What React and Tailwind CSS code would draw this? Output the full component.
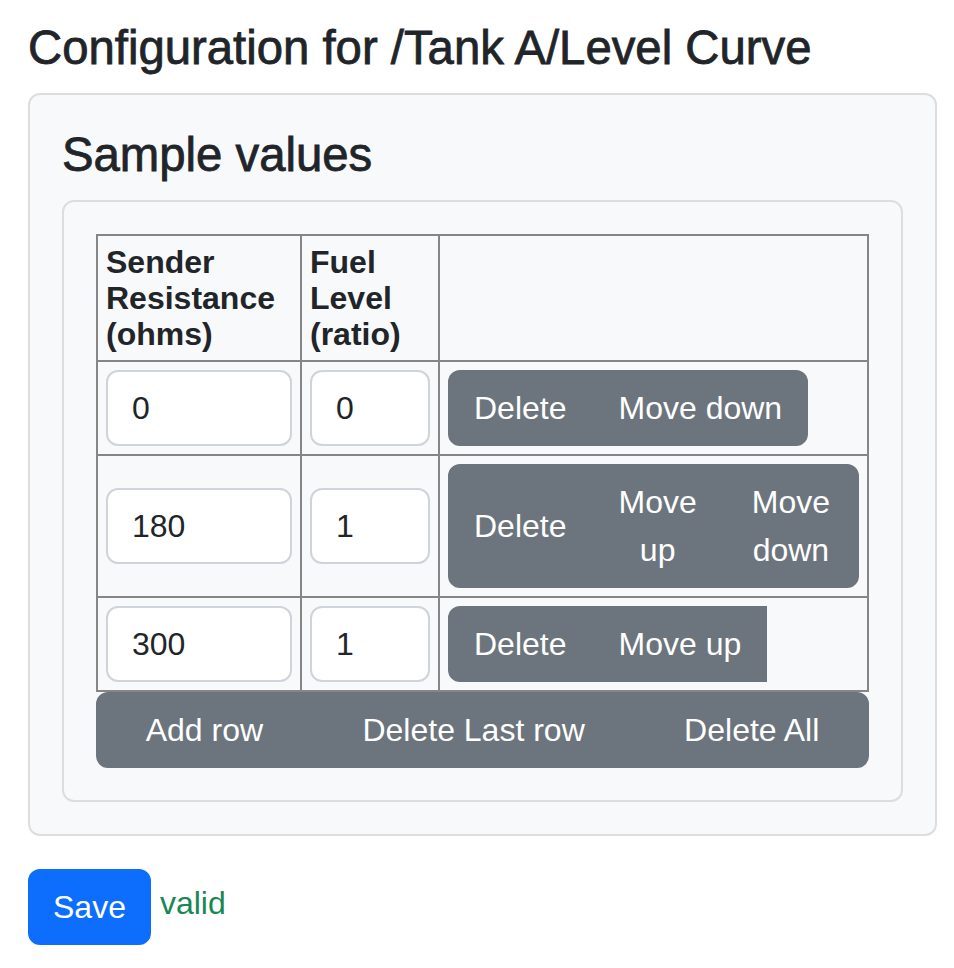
import React from "react";

const rows = [
  { r: "0", f: "0", up: false, down: true },
  { r: "180", f: "1", up: true, down: true },
  { r: "300", f: "1", up: true, down: false },
];

function Btn({ children, first, last }) {
  return (
    <button
      type="button"
      className={
        "flex items-center justify-center border-2 border-[#6c757d] bg-[#6c757d] px-[24px] py-[12px] text-center text-[32px] leading-[48px] text-white " +
        (first ? "rounded-l-[12px] " : "") +
        (last ? "rounded-r-[12px]" : "")
      }
    >
      {children}
    </button>
  );
}

function Cell({ children, className = "" }) {
  return <div className={"bg-[#f8f9fa] p-[8px] " + className}>{children}</div>;
}

function Input({ value }) {
  return (
    <input
      readOnly
      value={value}
      className="block w-full rounded-[12px] border-2 border-[#ced4da] bg-white px-[24px] py-[12px] text-[32px] leading-[48px] text-[#212529] outline-none"
    />
  );
}

export default function App() {
  return (
    <div className="min-h-screen bg-white pl-[28px] pr-[17px] pt-[20px] font-['Liberation_Sans',Arial,sans-serif] text-[32px] leading-[48px] text-[#212529]">
      <h3 className="mb-[16px] text-[47.3px] font-medium leading-[1.2] [-webkit-text-stroke:0.8px_#212529]">
        Configuration for /Tank A/Level Curve
      </h3>
      <div className="rounded-[12px] border-2 border-[#dcdddf] bg-[#f8f9fa] p-[32px]">
        <h3 className="mb-[16px] text-[47.3px] font-medium leading-[1.2] [-webkit-text-stroke:0.8px_#212529]">
          Sample values
        </h3>
        <div className="rounded-[12px] border-2 border-[#dcdddf] bg-[#f8f9fa] p-[32px]">
          <div className="grid grid-cols-[202px_136px_1fr] gap-[2px] border-2 border-[#868686] bg-[#868686]">
            <Cell className="text-[32px] font-bold leading-[36px]">
              Sender Resistance (ohms)
            </Cell>
            <Cell className="text-[32px] font-bold leading-[36px]">
              Fuel Level (ratio)
            </Cell>
            <Cell />
            {rows.map((row, i) => (
              <React.Fragment key={i}>
                <Cell className="flex items-center">
                  <Input value={row.r} />
                </Cell>
                <Cell className="flex items-center">
                  <Input value={row.f} />
                </Cell>
                <Cell className="flex items-center">
                  <div className="flex max-w-full">
                    <Btn first last={false}>
                      Delete
                    </Btn>
                    {row.up && <Btn last={false}>Move up</Btn>}
                    {row.down && <Btn last>Move down</Btn>}
                  </div>
                </Cell>
              </React.Fragment>
            ))}
          </div>
          <div className="flex w-full">
            <button
              type="button"
              className="grow rounded-l-[12px] border-2 border-[#6c757d] bg-[#6c757d] px-[24px] py-[12px] text-[32px] leading-[48px] text-white"
            >
              Add row
            </button>
            <button
              type="button"
              className="grow border-2 border-[#6c757d] bg-[#6c757d] px-[24px] py-[12px] text-[32px] leading-[48px] text-white"
            >
              Delete Last row
            </button>
            <button
              type="button"
              className="grow rounded-r-[12px] border-2 border-[#6c757d] bg-[#6c757d] px-[24px] py-[12px] text-[32px] leading-[48px] text-white"
            >
              Delete All
            </button>
          </div>
        </div>
      </div>
      <div className="mt-[33px] flex items-start pb-[24px]">
        <button
          type="button"
          className="rounded-[12px] border-2 border-[#0d6efd] bg-[#0d6efd] px-[23px] py-[12px] text-[32px] leading-[48px] text-white"
        >
          Save
        </button>
        <span className="ml-[9px] mt-[10px] text-[32px] leading-[48px] text-[#198754]">valid</span>
      </div>
    </div>
  );
}
